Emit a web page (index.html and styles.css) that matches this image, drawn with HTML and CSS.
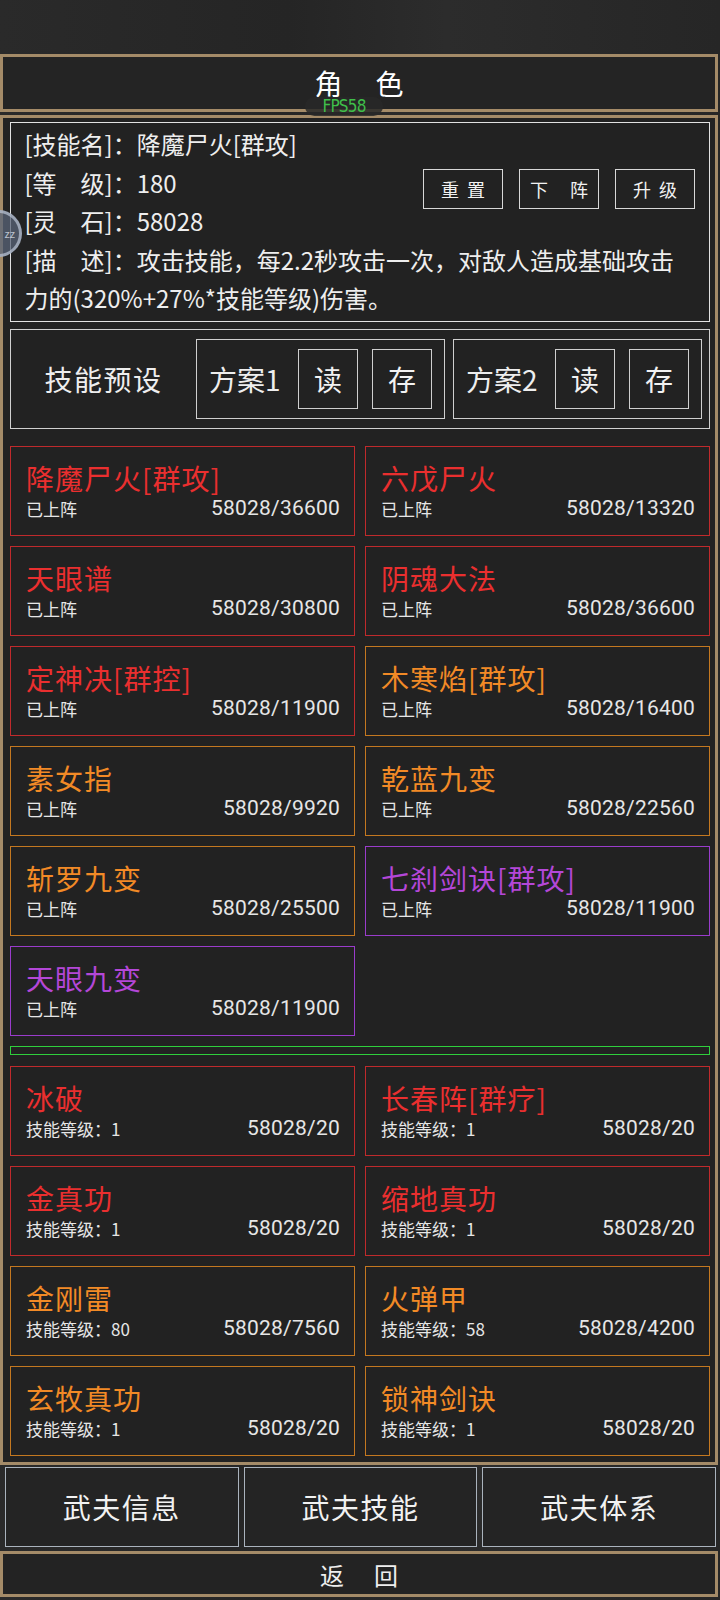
FILE: index.html
```html
<!DOCTYPE html>
<html lang="zh-CN">
<head>
    <meta charset="UTF-8">
    <meta name="viewport" content="width=device-width, initial-scale=1.0">
    <title>角色</title>
    <link rel="stylesheet" href="styles.css">
</head>
<body>
    <div class="statusbar"></div>

    <div class="title">
        <span>角　色</span>
        <div class="fps">FPS58</div>
    </div>

    <div class="float-ball">zz</div>

    <div class="panel">
        <div class="info">
            <div class="line">[技能名]：降魔尸火[群攻]</div>
            <div class="info-mid">
                <div>
                    <div class="line">[等　级]：180</div>
                    <div class="line">[灵　石]：58028</div>
                </div>
                <div class="info-btns">
                    <button class="btn">重 置</button>
                    <button class="btn">下　阵</button>
                    <button class="btn">升 级</button>
                </div>
            </div>
            <div class="line desc">[描　述]：攻击技能，每2.2秒攻击一次，对敌人造成基础攻击力的(320%+27%*技能等级)伤害。</div>
        </div>

        <div class="preset">
            <div class="preset-label">技能预设</div>
            <div class="plan">
                <span class="plan-name">方案1</span>
                <button class="sq">读</button>
                <button class="sq">存</button>
            </div>
            <div class="plan">
                <span class="plan-name">方案2</span>
                <button class="sq">读</button>
                <button class="sq">存</button>
            </div>
        </div>

        <div class="skills first">
            <div class="card red"><div class="name">降魔尸火[群攻]</div><div class="meta"><span>已上阵</span><span class="num">58028/36600</span></div></div>
            <div class="card red"><div class="name">六戊尸火</div><div class="meta"><span>已上阵</span><span class="num">58028/13320</span></div></div>
            <div class="card red"><div class="name">天眼谱</div><div class="meta"><span>已上阵</span><span class="num">58028/30800</span></div></div>
            <div class="card red"><div class="name">阴魂大法</div><div class="meta"><span>已上阵</span><span class="num">58028/36600</span></div></div>
            <div class="card red"><div class="name">定神决[群控]</div><div class="meta"><span>已上阵</span><span class="num">58028/11900</span></div></div>
            <div class="card orange"><div class="name">木寒焰[群攻]</div><div class="meta"><span>已上阵</span><span class="num">58028/16400</span></div></div>
            <div class="card orange"><div class="name">素女指</div><div class="meta"><span>已上阵</span><span class="num">58028/9920</span></div></div>
            <div class="card orange"><div class="name">乾蓝九变</div><div class="meta"><span>已上阵</span><span class="num">58028/22560</span></div></div>
            <div class="card orange"><div class="name">斩罗九变</div><div class="meta"><span>已上阵</span><span class="num">58028/25500</span></div></div>
            <div class="card purple"><div class="name">七刹剑诀[群攻]</div><div class="meta"><span>已上阵</span><span class="num">58028/11900</span></div></div>
            <div class="card purple"><div class="name">天眼九变</div><div class="meta"><span>已上阵</span><span class="num">58028/11900</span></div></div>
        </div>

        <div class="divider"></div>

        <div class="skills">
            <div class="card red"><div class="name">冰破</div><div class="meta"><span>技能等级：1</span><span class="num">58028/20</span></div></div>
            <div class="card red"><div class="name">长春阵[群疗]</div><div class="meta"><span>技能等级：1</span><span class="num">58028/20</span></div></div>
            <div class="card red"><div class="name">金真功</div><div class="meta"><span>技能等级：1</span><span class="num">58028/20</span></div></div>
            <div class="card red"><div class="name">缩地真功</div><div class="meta"><span>技能等级：1</span><span class="num">58028/20</span></div></div>
            <div class="card orange"><div class="name">金刚雷</div><div class="meta"><span>技能等级：80</span><span class="num">58028/7560</span></div></div>
            <div class="card orange"><div class="name">火弹甲</div><div class="meta"><span>技能等级：58</span><span class="num">58028/4200</span></div></div>
            <div class="card orange"><div class="name">玄牧真功</div><div class="meta"><span>技能等级：1</span><span class="num">58028/20</span></div></div>
            <div class="card orange"><div class="name">锁神剑诀</div><div class="meta"><span>技能等级：1</span><span class="num">58028/20</span></div></div>
        </div>
    </div>

    <div class="nav">
        <button class="nav-btn">武夫信息</button>
        <button class="nav-btn">武夫技能</button>
        <button class="nav-btn">武夫体系</button>
    </div>

    <div class="back">返　回</div>
</body>
</html>
```

FILE: styles.css
```css
* {
    box-sizing: border-box;
}
body {
    margin: 0;
    width: 720px;
    height: 1600px;
    overflow: hidden;
    position: relative;
    font-family: "Noto Sans CJK SC", "Noto Sans", sans-serif;
    color: #eeeeee;
    background: linear-gradient(90deg, #2a2a2a 0%, #252525 40%, #2c2c2c 62%, #262626 100%);
}
button {
    font-family: inherit;
    color: #f2f2f2;
    background: transparent;
    cursor: pointer;
    padding: 0;
}
.statusbar {
    height: 54px;
}
.title {
    position: relative;
    height: 58px;
    margin-right: 2px;
    border: 3px solid #a48b68;
    display: flex;
    justify-content: center;
    align-items: center;
    font-size: 28px;
    letter-spacing: 2.5px;
    color: #ffffff;
    background: #242424;
}
.title span {
    line-height: 26px;
    padding-left: 2.5px;
}
.fps {
    position: absolute;
    left: 302px;
    top: 40px;
    width: 78px;
    height: 19px;
    border-radius: 10px;
    background: rgba(40, 40, 40, 0.85);
    color: #3fbf4a;
    font-family: "DejaVu Sans", sans-serif;
    font-stretch: condensed;
    font-size: 17px;
    letter-spacing: -0.8px;
    line-height: 19px;
    text-align: center;
}
.float-ball {
    position: absolute;
    left: -25px;
    top: 210px;
    width: 47px;
    height: 47px;
    border-radius: 50%;
    border: 3px solid rgba(190, 200, 215, 0.7);
    background: rgba(90, 100, 120, 0.75);
    color: rgba(220, 225, 235, 0.8);
    font-size: 11px;
    line-height: 41px;
    text-align: right;
    padding-right: 4px;
    z-index: 2;
}
.panel {
    margin: 3px 2px 0 0;
    border: 3px solid #a48b68;
    padding: 4px 5px 6px 7px;
    background: #222222;
}
.info {
    height: 200px;
    border: 1.5px solid #e2e2e2;
    padding: 2px 14px 0 13.5px;
    font-size: 24px;
}
.line {
    line-height: 38.5px;
    white-space: nowrap;
}
.desc {
    white-space: normal;
    padding-right: 8px;
}
.info-mid {
    display: flex;
    justify-content: space-between;
    align-items: flex-start;
}
.info-btns {
    display: flex;
    gap: 16px;
    margin-top: 5px;
}
.btn {
    width: 80px;
    height: 40px;
    border: 1.5px solid #d8d8d8;
    font-size: 18px;
    letter-spacing: 2px;
    padding-left: 2px;
}
.preset {
    margin-top: 7px;
    height: 100px;
    border: 1.5px solid #d0d0d0;
    display: flex;
    align-items: center;
    padding-right: 6px;
}
.preset-label {
    width: 185px;
    text-align: center;
    font-size: 28px;
    letter-spacing: 1.5px;
}
.plan {
    width: 249px;
    height: 80px;
    border: 1.5px solid #cfcfcf;
    display: flex;
    align-items: center;
    padding: 0 12px;
    margin-right: 8px;
}
.plan:last-child {
    margin-right: 0;
}
.plan-name {
    font-size: 28px;
    flex: 1;
}
.sq {
    width: 60px;
    height: 60px;
    border: 1.5px solid #cfcfcf;
    font-size: 28px;
    margin-left: 14px;
}
.skills {
    display: grid;
    grid-template-columns: 345px 345px;
    column-gap: 10px;
    row-gap: 10px;
    margin-top: 11px;
}
.skills.first {
    margin-top: 17px;
}
.card {
    height: 90px;
    border: 1.5px solid;
    padding: 14px 14px 0 15px;
}
.name {
    font-size: 28px;
    letter-spacing: 1px;
    line-height: 34px;
    white-space: nowrap;
}
.meta {
    display: flex;
    justify-content: space-between;
    align-items: center;
    height: 26px;
    font-size: 17px;
    color: #e6e6e6;
}
.num {
    font-family: Roboto, "Noto Sans", sans-serif;
    font-size: 21px;
    letter-spacing: 0.2px;
}
.red {
    border-color: #c02a2c;
}
.red .name {
    color: #ea2f2f;
}
.orange {
    border-color: #c47820;
}
.orange .name {
    color: #f28a26;
}
.purple {
    border-color: #9a3ccc;
}
.purple .name {
    color: #b447d8;
}
.divider {
    margin-top: 10px;
    height: 9px;
    border: 1.5px solid #2fcf3c;
}
.nav {
    display: flex;
    gap: 5px;
    padding: 0 4px 0 5px;
    margin-top: 2px;
}
.nav-btn {
    flex: 1;
    height: 80px;
    border: 1.5px solid #aab3bd;
    background: #242424;
    font-size: 28px;
    letter-spacing: 1.5px;
}
.back {
    margin: 4px 2px 0 0;
    height: 46px;
    border: 3px solid #a48b68;
    background: #232323;
    display: flex;
    justify-content: center;
    align-items: center;
    font-size: 24px;
    letter-spacing: 3px;
    padding-left: 3px;
}
```
